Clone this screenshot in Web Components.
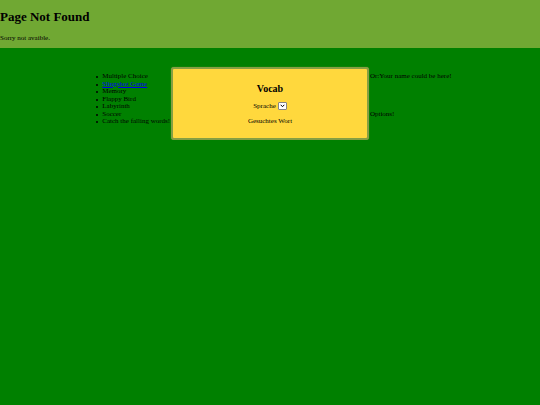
<!DOCTYPE html>
<html lang="en">
<head>
<meta charset="utf-8">
<title>Page Not Found</title>
<style>
  body {
    margin: 0;
    background: #008000;
    color: #000;
    font: 7px/8px "Liberation Serif", serif;
  }
</style>
</head>
<body>
<page-banner heading="Page Not Found">Sorry not avaible.</page-banner>
<game-board>
  <game-list slot="games"></game-list>
  <vocab-card heading="Vocab"></vocab-card>
  <side-notes slot="notes"></side-notes>
</game-board>

<script>
class PageBanner extends HTMLElement {
  constructor() {
    super();
    this.attachShadow({ mode: 'open' });
  }

  connectedCallback() {
    this.shadowRoot.innerHTML = `
      <style>
        :host {
          display: block;
          padding: 9px 0 6px;
          background: #70a833;
        }

        h1 {
          margin: 0 0 9px;
          font-size: 13px;
          line-height: 16px;
        }

        p {
          margin: 0;
        }
      </style>
      <h1>${this.getAttribute('heading')}</h1>
      <p><slot></slot></p>
    `;
  }
}

class GameBoard extends HTMLElement {
  constructor() {
    super();
    this.attachShadow({ mode: 'open' });
    this.shadowRoot.innerHTML = `
      <style>
        :host {
          display: grid;
          grid-template-columns: 1fr calc(37% - 2px) 1fr;
          column-gap: 1px;
          padding-top: 19px;
        }

        nav {
          display: flex;
          justify-content: flex-end;
        }
      </style>
      <nav><slot name="games"></slot></nav>
      <main><slot></slot></main>
      <aside><slot name="notes"></slot></aside>
    `;
  }
}

class GameList extends HTMLElement {
  constructor() {
    super();
    this.attachShadow({ mode: 'open' });
    this._games = [
      { name: 'Multiple Choice' },
      { name: 'Slingshot Game', href: '#slingshot' },
      { name: 'Memory' },
      { name: 'Flappy Bird' },
      { name: 'Labyrinth' },
      { name: 'Soccer' },
      { name: 'Catch the falling words!' },
    ];
  }

  connectedCallback() {
    this.shadowRoot.innerHTML = `
      <style>
        :host {
          display: block;
          padding-top: 5px;
        }

        ul {
          display: grid;
          grid-template-rows: repeat(7, minmax(0, 1fr));
          height: 53px;
          margin: 0;
          padding: 0;
          list-style: none;
        }

        li {
          display: flex;
          gap: 4px;
        }

        li::before {
          content: "";
          width: 2px;
          height: 2px;
          margin-top: 4px;
          border-radius: 1px;
          background: currentColor;
        }

        a {
          color: #0000ee;
        }
      </style>
      <ul>
        ${this._games.map((game) => `
          <li>${game.href ? `<a href="${game.href}">${game.name}</a>` : game.name}</li>
        `).join('')}
      </ul>
    `;
  }
}

class VocabCard extends HTMLElement {
  constructor() {
    super();
    this.attachShadow({ mode: 'open' });
  }

  connectedCallback() {
    this.shadowRoot.innerHTML = `
      <style>
        :host {
          display: block;
          padding: 14px 8px 13px;
          border: 2px solid #869f43;
          border-radius: 3px;
          background: #ffd83d;
          box-shadow: 0 0 1px #869f43;
          text-align: center;
        }

        h2 {
          margin: 0 0 6px;
          font-size: 10px;
          line-height: 12px;
        }

        .language {
          display: flex;
          align-items: center;
          justify-content: center;
          gap: 2px;
          height: 9px;
          margin-bottom: 7px;
        }

        select {
          appearance: none;
          box-sizing: border-box;
          width: 9px;
          height: 8px;
          margin: 0;
          padding: 0;
          border: 1px solid #858585;
          border-radius: 1px;
          background: #fff;
        }

        .picker {
          display: grid;
        }

        .picker > * {
          grid-area: 1 / 1;
        }

        svg {
          place-self: center;
          z-index: 1;
          pointer-events: none;
        }

        p {
          margin: 0;
        }
      </style>
      <h2>${this.getAttribute('heading')}</h2>
      <div class="language">
        <label for="language">Sprache</label>
        <span class="picker">
          <select id="language"></select>
          <svg width="5" height="4" viewBox="0 0 5 4" fill="none" stroke="#000" aria-hidden="true">
            <path d="M0.7 0.8 2.5 2.7 4.3 0.8"/>
          </svg>
        </span>
      </div>
      <p>Gesuchtes Wort</p>
    `;
  }
}

class SideNotes extends HTMLElement {
  constructor() {
    super();
    this.attachShadow({ mode: 'open' });
    this.shadowRoot.innerHTML = `
      <style>
        :host {
          display: flex;
          flex-direction: column;
          gap: 30px;
          padding-top: 5px;
        }

        p {
          margin: 0;
        }
      </style>
      <p>Or:Your name could be here!</p>
      <p>Options!</p>
    `;
  }
}

customElements.define('page-banner', PageBanner);
customElements.define('game-board', GameBoard);
customElements.define('game-list', GameList);
customElements.define('vocab-card', VocabCard);
customElements.define('side-notes', SideNotes);
</script>
</body>
</html>
